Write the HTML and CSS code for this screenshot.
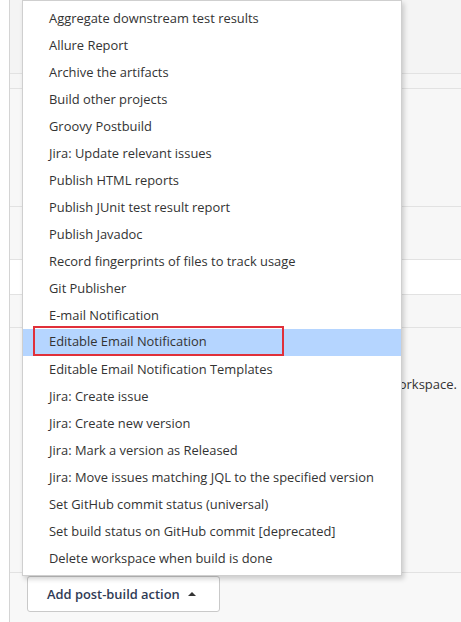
FILE: index.html
```html
<!DOCTYPE html>
<html>
<head>
<meta charset="utf-8">
<link rel="stylesheet" href="styles.css">
</head>
<body>
<div class="page">
  <div class="panel">
    <div class="row r1"></div>
    <div class="row r2"></div>
    <div class="row r3"></div>
    <div class="row r4"></div>
    <div class="row r5 white"></div>
    <div class="row r6"></div>
    <div class="row r7"><p class="help">Delete the workspace.</p></div>
    <div class="row r8">
      <button class="add-btn">Add post-build action <span class="caret"></span></button>
    </div>
  </div>
  <ul class="menu">
    <li>Aggregate downstream test results</li>
    <li>Allure Report</li>
    <li>Archive the artifacts</li>
    <li>Build other projects</li>
    <li>Groovy Postbuild</li>
    <li>Jira: Update relevant issues</li>
    <li>Publish HTML reports</li>
    <li>Publish JUnit test result report</li>
    <li>Publish Javadoc</li>
    <li>Record fingerprints of files to track usage</li>
    <li>Git Publisher</li>
    <li>E-mail Notification</li>
    <li class="active"><span class="mark">Editable Email Notification</span></li>
    <li>Editable Email Notification Templates</li>
    <li>Jira: Create issue</li>
    <li>Jira: Create new version</li>
    <li>Jira: Mark a version as Released</li>
    <li>Jira: Move issues matching JQL to the specified version</li>
    <li>Set GitHub commit status (universal)</li>
    <li>Set build status on GitHub commit [deprecated]</li>
    <li>Delete workspace when build is done</li>
  </ul>
</div>
</body>
</html>
```

FILE: styles.css
```css
* { box-sizing: border-box; }
html, body { margin: 0; padding: 0; background: #fff; }
body {
  font-family: "Open Sans", Lato, sans-serif;
  font-size: 12.9px;
  color: #333;
}
.page {
  position: relative;
  width: 461px;
  height: 622px;
  overflow: hidden;
  padding-left: 9px;
}
.panel {
  height: 622px;
  background: #f7f7f7;
  border-left: 1px solid #d4d4d4;
  display: flex;
  flex-direction: column;
}
.row { border-bottom: 1px solid #e2e2e2; }
.r1 { height: 74px; background: #f4f4f4; }
.r2 { height: 15px; background: #f6f6f6; }
.r3 { height: 118px; }
.r4 { height: 53px; }
.r5 { height: 35px; }
.white { background: #fff; }
.r6 { height: 33px; }
.r7 {
  height: 245px;
  display: flex;
  justify-content: flex-end;
  padding-right: 4px;
}
.help {
  margin: 47px 0 0;
  font-size: 13px;
  color: #333;
}
.r8 {
  border-bottom: none;
  flex: 1;
  background: #f8f8f8;
  padding: 3px 0 0 17px;
}
.add-btn {
  height: 36px;
  width: 193px;
  background: #fff;
  border: 1px solid #c9c9c9;
  border-radius: 3px;
  font-family: "Open Sans", Lato, sans-serif;
  font-size: 12.9px;
  font-weight: 600;
  color: #2f3b55;
  padding: 0 0 0 19px;
  text-align: left;
  display: flex;
  align-items: center;
  gap: 8px;
}
.caret {
  width: 0;
  height: 0;
  border-left: 4px solid transparent;
  border-right: 4px solid transparent;
  border-bottom: 4px solid #333;
}
.menu {
  position: absolute;
  left: 22px;
  top: 0;
  width: 380px;
  margin: 0;
  padding: 4px 0 3px;
  list-style: none;
  background: #fff;
  border: 1px solid #cfcfcf;
  box-shadow: 2px 3px 5px rgba(0,0,0,0.18);
}
.menu li {
  height: 27px;
  line-height: 27px;
  padding-left: 26px;
  white-space: nowrap;
}
.menu li.active {
  background: #b5d5ff;
  position: relative;
}
.mark {
  position: absolute;
  left: 10px;
  top: -3px;
  width: 251px;
  height: 30px;
  border: 2px solid #e0303a;
  padding-left: 14px;
  line-height: 27px;
}
```
